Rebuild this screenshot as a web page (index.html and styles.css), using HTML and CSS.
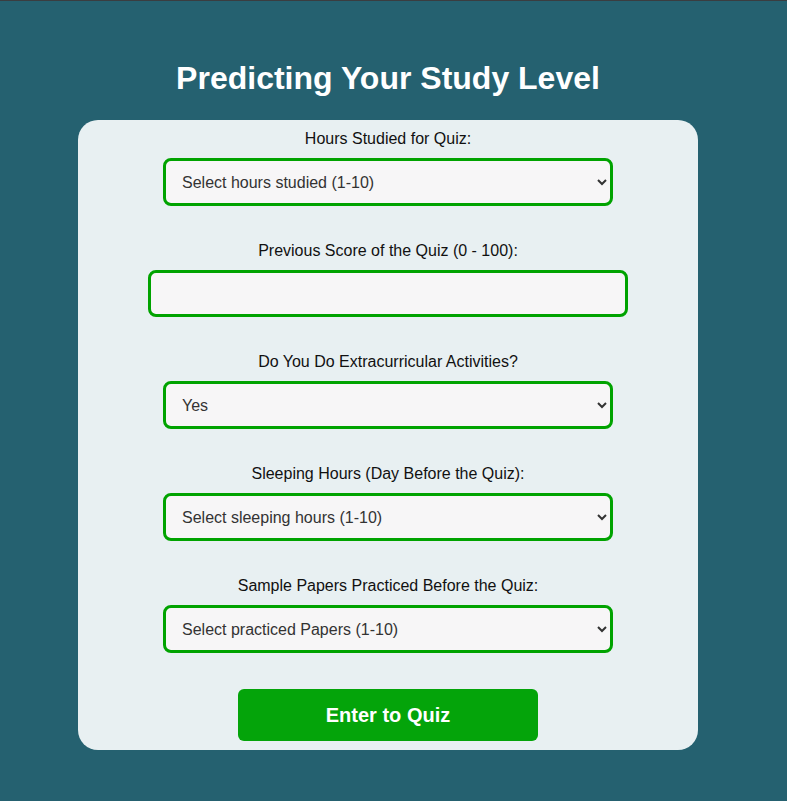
FILE: index.html
```html
<!DOCTYPE html>
<html>
<head>
<meta charset="utf-8">
<link rel="stylesheet" href="styles.css">
</head>
<body>
<div class="topline"></div>
<main class="page">
  <h1 class="title">Predicting Your Study Level</h1>
  <form class="card">
    <div class="group">
      <label class="label">Hours Studied for Quiz:</label>
      <select class="field sel">
        <option>Select hours studied (1-10)</option>
      </select>
    </div>
    <div class="group">
      <label class="label">Previous Score of the Quiz (0 - 100):</label>
      <input class="field inp" type="text">
    </div>
    <div class="group">
      <label class="label">Do You Do Extracurricular Activities?</label>
      <select class="field sel">
        <option>Yes</option>
        <option>No</option>
      </select>
    </div>
    <div class="group">
      <label class="label">Sleeping Hours (Day Before the Quiz):</label>
      <select class="field sel">
        <option>Select sleeping hours (1-10)</option>
      </select>
    </div>
    <div class="group">
      <label class="label">Sample Papers Practiced Before the Quiz:</label>
      <select class="field sel">
        <option>Select practiced Papers (1-10)</option>
      </select>
    </div>
    <button class="btn" type="button">Enter to Quiz</button>
  </form>
</main>
</body>
</html>
```

FILE: styles.css
```css
html, body {
  margin: 0;
  padding: 0;
}
body {
  background: #256170;
  font-family: "Liberation Sans", Arial, sans-serif;
  min-height: 801px;
}
.topline {
  height: 1px;
  background: #3a3d40;
}
.page {
  display: flex;
  flex-direction: column;
  align-items: center;
  padding-right: 11px;
}
.title {
  margin: 56px 0 20px;
  font-size: 32px;
  line-height: 43px;
  font-weight: bold;
  color: #ffffff;
  text-align: center;
}
.card {
  box-sizing: border-box;
  width: 620px;
  background: #e8f0f2;
  border-radius: 20px;
  padding: 10px 0 9px;
  display: flex;
  flex-direction: column;
  align-items: center;
}
.group {
  display: flex;
  flex-direction: column;
  align-items: center;
  margin-bottom: 36px;
}
.label {
  font-size: 16px;
  line-height: 18px;
  color: #111;
  margin-bottom: 10px;
}
.field {
  box-sizing: border-box;
  height: 48px;
  border: 3px solid #00a300;
  border-radius: 8px;
  background: #f7f6f7;
  font-family: "Liberation Sans", Arial, sans-serif;
  font-size: 16px;
  color: #333;
  outline: none;
}
.sel {
  width: 450px;
  padding: 0 14px 0 12px;
}
.inp {
  width: 480px;
  height: 47px;
  padding: 0 14px;
}
.btn {
  width: 300px;
  height: 52px;
  border: none;
  border-radius: 6px;
  background: #04a40a;
  color: #ffffff;
  font-family: "Liberation Sans", Arial, sans-serif;
  font-size: 20px;
  font-weight: bold;
  cursor: pointer;
}
```
